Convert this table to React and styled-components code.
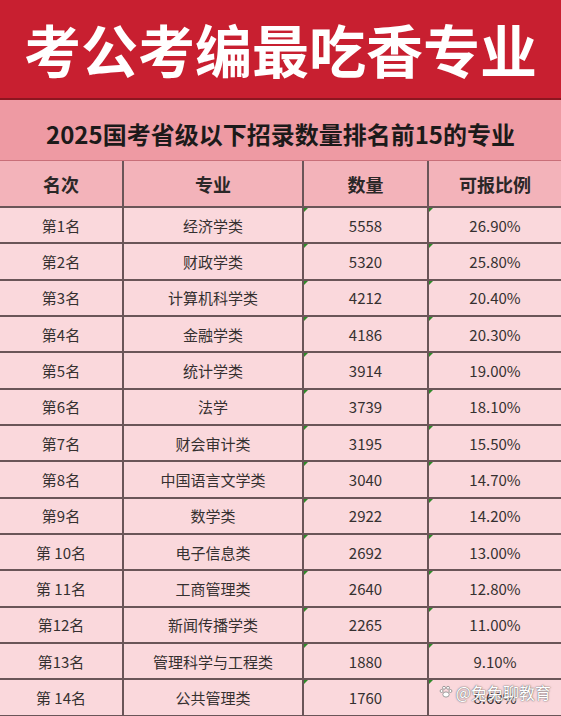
import styled, { createGlobalStyle } from "styled-components";

const rows = [
  ["第1名", "经济学类", "5558", "26.90%"],
  ["第2名", "财政学类", "5320", "25.80%"],
  ["第3名", "计算机科学类", "4212", "20.40%"],
  ["第4名", "金融学类", "4186", "20.30%"],
  ["第5名", "统计学类", "3914", "19.00%"],
  ["第6名", "法学", "3739", "18.10%"],
  ["第7名", "财会审计类", "3195", "15.50%"],
  ["第8名", "中国语言文学类", "3040", "14.70%"],
  ["第9名", "数学类", "2922", "14.20%"],
  ["第 10名", "电子信息类", "2692", "13.00%"],
  ["第 11名", "工商管理类", "2640", "12.80%"],
  ["第12名", "新闻传播学类", "2265", "11.00%"],
  ["第13名", "管理科学与工程类", "1880", "9.10%"],
  ["第 14名", "公共管理类", "1760", "8.60%"],
];

const Global = createGlobalStyle`
  body {
    margin: 0;
    background: #fad8dc;
    font-family: "Noto Sans CJK SC", "Noto Sans", sans-serif;
    overflow: hidden;
  }
`;

const App = () => {
  return (
    <Page>
      <Global />
      <Banner>考公考编最吃香专业</Banner>
      <Subtitle>2025国考省级以下招录数量排名前15的专业</Subtitle>
      <Table>
        <HeadCell>名次</HeadCell>
        <HeadCell>专业</HeadCell>
        <HeadCell>数量</HeadCell>
        <HeadCell last>可报比例</HeadCell>
        {rows.map((r) => (
          <Row key={r[0]}>
            <Cell>{r[0]}</Cell>
            <Cell>{r[1]}</Cell>
            <Cell marked>{r[2]}</Cell>
            <Cell marked last>{r[3]}</Cell>
          </Row>
        ))}
      </Table>
      <Watermark>
        <svg width="14" height="14" viewBox="0 0 14 14">
          <g fill="#fff" stroke="#888" strokeWidth="0.8">
            <ellipse cx="7" cy="9.5" rx="3.2" ry="2.6" />
            <circle cx="2.6" cy="6" r="1.5" />
            <circle cx="11.4" cy="6" r="1.5" />
            <circle cx="5" cy="2.8" r="1.5" />
            <circle cx="9" cy="2.8" r="1.5" />
          </g>
        </svg>
        @兔兔聊教育
      </Watermark>
    </Page>
  );
};

const Page = styled.div`
  position: relative;
  width: 561px;
  height: 716px;
  overflow: hidden;
`;

const Banner = styled.div`
  height: 100px;
  background: #c81f30;
  border-bottom: 2px solid #8c1620;
  display: flex;
  align-items: center;
  justify-content: center;
  color: #fff;
  font-size: 57px;
  font-weight: 700;
  white-space: nowrap;
  padding-bottom: 2px;
  box-sizing: border-box;
`;

const Subtitle = styled.div`
  height: 61px;
  background: #ee9aa3;
  border-bottom: 1px solid #c96f79;
  display: flex;
  align-items: center;
  justify-content: center;
  color: #1c1a1a;
  font-size: 24px;
  font-weight: 700;
  white-space: nowrap;
  box-sizing: border-box;
  padding-top: 6px;
`;

const Table = styled.div`
  display: grid;
  grid-template-columns: 124px 180px 125px 1fr;
  grid-template-rows: 47px;
  grid-auto-rows: 36.33px;
`;

const Row = styled.div`
  display: contents;
`;

const HeadCell = styled.div`
  background: #f3b3ba;
  display: flex;
  align-items: center;
  justify-content: center;
  font-size: 18px;
  font-weight: 700;
  color: #2b2727;
  border-bottom: 2px solid #6a5558;
  border-right: ${(p) => (p.last ? "none" : "2px solid #6a5558")};
  box-sizing: border-box;
`;

const Cell = styled.div`
  position: relative;
  background: #fad8dc;
  display: flex;
  align-items: center;
  justify-content: center;
  font-size: 15px;
  color: #353030;
  border-bottom: 2px solid #6a5558;
  border-right: ${(p) => (p.last ? "none" : "2px solid #6a5558")};
  box-sizing: border-box;

  &::before {
    content: "";
    display: ${(p) => (p.marked ? "block" : "none")};
    position: absolute;
    top: 0;
    left: 0;
    border-top: 4px solid #2f8a2a;
    border-right: 4px solid transparent;
  }
`;

const Watermark = styled.div`
  position: absolute;
  right: 10px;
  bottom: 12px;
  display: flex;
  align-items: center;
  gap: 3px;
  color: #fff;
  font-size: 16px;
  text-shadow: 0 0 1px #666, 0 0 2px #777;
`;

export default App;
